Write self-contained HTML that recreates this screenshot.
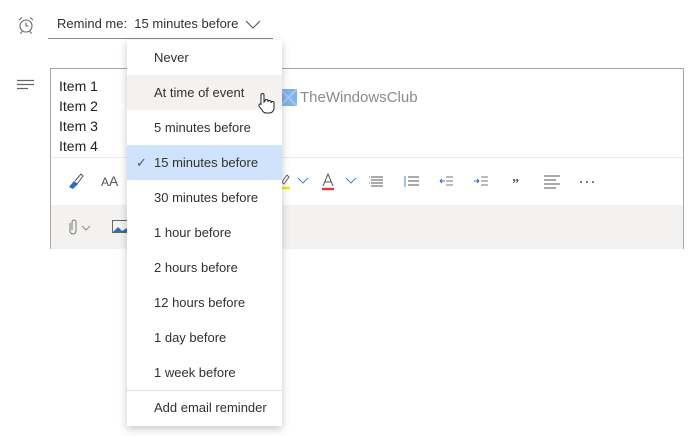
<!DOCTYPE html><html><head><style>
body{margin:0;width:700px;height:436px;background:#fff;font-family:"Liberation Sans","DejaVu Sans",sans-serif;position:relative;overflow:hidden;color:#323130}
.a{position:absolute}
.menu{left:127px;top:40px;width:155px;height:386px;background:#fff;box-shadow:0 3px 8px rgba(0,0,0,.22);}
.it{position:absolute;left:0;width:155px;height:35px;line-height:35px;font-size:13px;padding-left:27px;box-sizing:border-box;color:#323130}
.ic{position:absolute;color:#555;font-size:13px}
</style></head><body>
<svg class="a" style="left:17px;top:16px" width="18" height="18" viewBox="0 0 18 18" fill="none" stroke="#666" stroke-width="1.1"><circle cx="9" cy="10" r="6"/><path d="M9 6.5V10h2.5M2 4l3-2.5M16 4l-3-2.5M5 15.5l-1.5 2M13 15.5l1.5 2"/></svg>
<div class="a" style="left:57px;top:16px;font-size:13px;color:#323130">Remind me:&nbsp; 15 minutes before</div>
<svg class="a" style="left:245px;top:19px" width="16" height="10"><path d="M1 2l7 7 7-7" fill="none" stroke="#555" stroke-width="1.1"/></svg>
<div class="a" style="left:48px;top:38px;width:225px;height:1px;background:#8a8886"></div>
<svg class="a" style="left:17px;top:79px" width="18" height="12" stroke="#666" stroke-width="1.2"><path d="M0 1.5h17M0 5.5h17M0 9.5h11"/></svg>
<div class="a" style="left:50px;top:68px;width:634px;height:181px;border:1px solid #a8a6a4;box-sizing:border-box"></div>
<div class="a" style="left:51px;top:157px;width:632px;height:1px;background:#edebe9"></div>
<div class="a" style="left:51px;top:205px;width:632px;height:44px;background:#f3f2f1"></div>
<div class="a" style="left:59px;top:76px;font-size:14px;line-height:20px;color:#201f1e">Item 1<br>Item 2<br>Item 3<br>Item 4</div>
<svg class="a" style="left:66px;top:172px" width="18" height="18"><path d="M3 15l5-6 4 3-5 5z" fill="#2b6cc4"/><path d="M9 9l6-7 2 2-6 8" fill="none" stroke="#555"/></svg>
<div class="a" style="left:101px;top:173px;font-size:12px;color:#555">A<span style="font-size:14px">A</span></div>
<svg class="a" style="left:66px;top:218px" width="30" height="18" fill="none" stroke="#777"><path d="M4 5v8a3 3 0 006 0V4a2 2 0 00-4 0v8"/><path d="M16 8l4 4 4-4" stroke="#888"/></svg>
<svg class="a" style="left:112px;top:220px" width="16" height="13"><rect x=".5" y=".5" width="15" height="12" fill="none" stroke="#666"/><path d="M1 12l5-5 4 4 5-3v4z" fill="#2b6cc4"/></svg>
<svg class="a" style="left:280px;top:172px" width="320" height="20" fill="none">
<path d="M2 10l5-7 2 2-5 7z" stroke="#666"/><path d="M0 16h10" stroke="#f3e600" stroke-width="2.5"/>
<path d="M18 6l5 5 5-5" stroke="#3a8bc0"/>
<path d="M43 14l5-12 5 12M45 10h6" stroke="#555"/><path d="M42 17h12" stroke="#e03a3a" stroke-width="2.5"/>
<path d="M66 6l5 5 5-5" stroke="#3a8bc0"/>
<path d="M91 5h12M91 8h12M91 11h12M91 14h12" stroke="#555"/><path d="M89 5h1M89 11h1" stroke="#3a8bc0"/>
<path d="M128 5h11M128 9h11M128 13h11" stroke="#555"/><path d="M125 4v11" stroke="#3a8bc0"/>
<path d="M160 9h5M160 9l2-2M160 9l2 2" stroke="#2b6cc4"/><path d="M166 5h7M166 9h7M166 13h7" stroke="#777"/>
<path d="M194 9h5M199 9l-2-2M199 9l-2 2" stroke="#2b6cc4"/><path d="M201 5h7M201 9h7M201 13h7" stroke="#777"/>
<text x="232" y="16" font-size="14" font-weight="bold" fill="#555" font-family="Liberation Serif">”</text>
<path d="M264 4h16M264 8h12M264 12h16M264 16h12" stroke="#555"/>
<circle cx="301" cy="10" r="1" fill="#555"/><circle cx="307" cy="10" r="1" fill="#555"/><circle cx="313" cy="10" r="1" fill="#555"/>
</svg>
<svg class="a" style="left:280px;top:89px" width="17" height="17"><path d="M0 0h17v17H0z" fill="#7fb3e6"/><path d="M0 0l17 17M17 0L0 17" stroke="#a7c8ee" stroke-width="2"/></svg>
<div class="a" style="left:300px;top:89px;font-size:15px;color:#8a8a8a">TheWindowsClub</div>
<div class="a menu">
<div class="it" style="top:0">Never</div>
<div class="it" style="top:35px;background:#f3f2f1">At time of event</div>
<div class="it" style="top:70px">5 minutes before</div>
<div class="it" style="top:105px;background:#cfe4fa"><span style="position:absolute;left:9px;color:#555">✓</span>15 minutes before</div>
<div class="it" style="top:140px">30 minutes before</div>
<div class="it" style="top:175px">1 hour before</div>
<div class="it" style="top:210px">2 hours before</div>
<div class="it" style="top:245px">12 hours before</div>
<div class="it" style="top:280px">1 day before</div>
<div class="it" style="top:315px">1 week before</div>
<div class="a" style="left:0;top:350px;width:155px;height:1px;background:#e1dfdd"></div>
<div class="it" style="top:350px">Add email reminder</div>
</div>
<svg class="a" style="left:256px;top:92px" width="20" height="24"><path d="M5 13V3a1.5 1.5 0 013 0v7l1-1a1.5 1.5 0 013 0v1a1.5 1.5 0 013 0v1a1.5 1.5 0 013 0v5c0 3-2 5-5 5h-3c-2 0-3-1-4-3l-3-4a1.5 1.5 0 012-2z" fill="#fff" stroke="#222"/></svg>
</body></html>
